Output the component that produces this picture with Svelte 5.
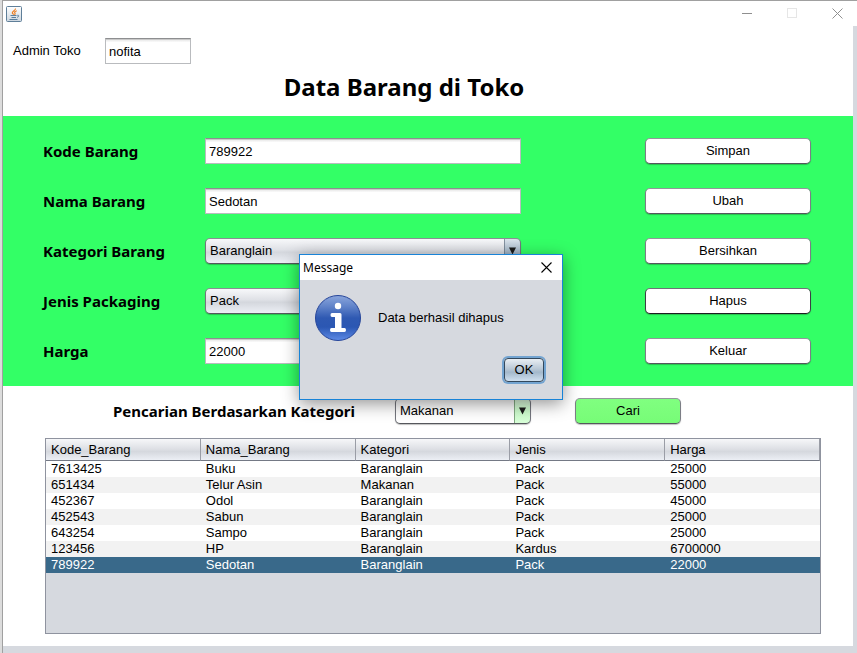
<script>
  const kategoriList = ['Baranglain', 'Makanan'];
  const jenisList = ['Pack', 'Kardus'];
  const columns = ['Kode_Barang', 'Nama_Barang', 'Kategori', 'Jenis', 'Harga'];
  const rows = [
    ['7613425', 'Buku', 'Baranglain', 'Pack', '25000'],
    ['651434', 'Telur Asin', 'Makanan', 'Pack', '55000'],
    ['452367', 'Odol', 'Baranglain', 'Pack', '45000'],
    ['452543', 'Sabun', 'Baranglain', 'Pack', '25000'],
    ['643254', 'Sampo', 'Baranglain', 'Pack', '25000'],
    ['123456', 'HP', 'Baranglain', 'Kardus', '6700000'],
    ['789922', 'Sedotan', 'Baranglain', 'Pack', '22000']
  ];
  const actions = ['Simpan', 'Ubah', 'Bersihkan', 'Hapus', 'Keluar'];

  let admin = $state('nofita');
  let kode = $state('789922');
  let nama = $state('Sedotan');
  let kategori = $state('Baranglain');
  let jenis = $state('Pack');
  let harga = $state('22000');
  let cari = $state('Makanan');
  let selected = $state(6);
  let dialogOpen = $state(true);
</script>

{#snippet arrow()}
  <svg class="arrow" width="9" height="8" viewBox="0 0 9 8" aria-hidden="true"><path d="M1 0.5H8L4.5 7.5Z" fill="#1b1b1b" /></svg>
{/snippet}

<div class="window">
  <header class="titlebar">
    <svg class="java" width="16" height="16" viewBox="0 0 16 16" aria-hidden="true">
      <defs>
        <linearGradient id="jv" x1="0" y1="0" x2="0" y2="1">
          <stop offset="0" stop-color="#ffffff" /><stop offset="1" stop-color="#ccd6df" />
        </linearGradient>
      </defs>
      <rect x="0.5" y="0.5" width="15" height="15" rx="1" fill="url(#jv)" stroke="#5f7f99" />
      <path d="M9.500 2.500C10 4.300 6 5 6.300 6.800C6.500 7.700 7.500 8 7.600 8.700M10.800 4.800C8.500 5.500 8.200 6.300 9 7.200C9.400 7.800 9 8.300 8.500 8.800" fill="none" stroke="#ec7f24" stroke-width="1.200" />
      <path d="M4.500 9.500H10.500M11.300 9.300C13.400 8.800 13.200 11 11 11.300M5.500 11.500H10M3.500 13.500H11.500" fill="none" stroke="#5b7f9c" stroke-width="1" />
    </svg>
    <div class="controls">
      <button aria-label="Minimize"><svg width="11" height="11"><path d="M0 5.500H10" stroke="#8f8f8f" /></svg></button>
      <button aria-label="Maximize" disabled><svg width="11" height="11"><rect x="0.5" y="0.5" width="9" height="9" fill="none" stroke="#e6e6e6" /></svg></button>
      <button aria-label="Close"><svg width="11" height="11"><path d="M0.500 0.500L10.500 10.500M10.500 0.500L0.500 10.500" stroke="#8f8f8f" /></svg></button>
    </div>
  </header>

  <main>
    <div class="admin">
      <label for="admin">Admin Toko</label>
      <input id="admin" type="text" bind:value={admin} />
    </div>
    <h1>Data Barang di Toko</h1>

    <section class="form">
      <div class="fields">
        <label for="kode">Kode Barang</label>
        <input id="kode" type="text" bind:value={kode} />
        <label for="nama">Nama Barang</label>
        <input id="nama" type="text" bind:value={nama} />
        <label for="kategori">Kategori Barang</label>
        <div class="combo">
          <select id="kategori" bind:value={kategori}>
            {#each kategoriList as k}<option>{k}</option>{/each}
          </select>
          {@render arrow()}
        </div>
        <label for="jenis">Jenis Packaging</label>
        <div class="combo">
          <select id="jenis" bind:value={jenis}>
            {#each jenisList as j}<option>{j}</option>{/each}
          </select>
          {@render arrow()}
        </div>
        <label for="harga">Harga</label>
        <input id="harga" type="text" bind:value={harga} />
      </div>
      <div class="actions">
        {#each actions as a}
          <button class="push" class:dark={a === 'Hapus'}>{a}</button>
        {/each}
      </div>
    </section>

    <div class="search">
      <label for="cari">Pencarian Berdasarkan Kategori</label>
      <div class="combo pale">
        <select id="cari" bind:value={cari}>
          {#each kategoriList as k}<option>{k}</option>{/each}
        </select>
        {@render arrow()}
      </div>
      <button class="push find">Cari</button>
    </div>

    <div class="tablebox">
      <table>
        <thead>
          <tr>{#each columns as c}<th scope="col">{c}</th>{/each}</tr>
        </thead>
        <tbody>
          {#each rows as row, i}
            <tr class:selected={i === selected} onclick={() => (selected = i)}>
              {#each row as cell}<td>{cell}</td>{/each}
            </tr>
          {/each}
        </tbody>
      </table>
    </div>
  </main>

  {#if dialogOpen}
    <div class="dialog" role="dialog" aria-labelledby="dlg-title">
      <div class="dialog-title">
        <span id="dlg-title">Message</span>
        <button aria-label="Close message" onclick={() => (dialogOpen = false)}>
          <svg width="11" height="11"><path d="M0.500 0.500L10.500 10.500M10.500 0.500L0.500 10.500" stroke="#000" stroke-width="1.100" /></svg>
        </button>
      </div>
      <div class="dialog-body">
        <svg width="48" height="48" viewBox="0 0 48 48" aria-hidden="true">
          <defs>
            <linearGradient id="info" x1="0" y1="0" x2="0" y2="1">
              <stop offset="0" stop-color="#8ba6dc" />
              <stop offset="0.250" stop-color="#5f82c9" />
              <stop offset="0.500" stop-color="#2f59b2" />
              <stop offset="0.700" stop-color="#2b57b3" />
              <stop offset="1" stop-color="#5d8ae6" />
            </linearGradient>
          </defs>
          <circle cx="24" cy="24" r="22.500" fill="url(#info)" stroke="#27469a" />
          <circle cx="24" cy="12" r="3.200" fill="#fff" />
          <path d="M18 19H26Q27.500 19 27.500 20.500V34H30.500Q32 34 32 36T30.500 38H17.500Q16 38 16 36T17.500 34H21V23H18Q16.500 23 16.500 21T18 19Z" fill="#fff" />
        </svg>
        <p>Data berhasil dihapus</p>
      </div>
      <div class="dialog-foot">
        <button class="ok" onclick={() => (dialogOpen = false)}>OK</button>
      </div>
    </div>
  {/if}
</div>

<style>
  :global(body) {
    margin: 0;
    background: #dcdcdc;
  }
  .window,
  button,
  input,
  select {
    font: 13px/16px 'Liberation Sans', Arial, sans-serif;
    color: #000;
  }
  .window {
    box-sizing: border-box;
    position: relative;
    min-height: 100vh;
    border-top: 1px solid #a0a0a0;
    border-left: 1px solid #a0a0a0;
    margin-left: 2px;
    background: #d6d9df;
  }
  button {
    box-sizing: border-box;
    margin: 0;
    padding: 0;
    border: 0;
    background: none;
  }
  .titlebar {
    display: flex;
    justify-content: space-between;
    align-items: center;
    height: 25px;
    padding: 0 14px 0 3px;
    background: #fff;
  }
  .controls {
    display: flex;
    gap: 34px;
  }
  .controls button,
  .dialog-title button {
    display: flex;
  }
  main {
    margin-right: 4px;
    background: #fff;
    padding: 12px 0;
  }
  .admin {
    display: flex;
    align-items: center;
    padding-left: 10px;
  }
  .admin label {
    width: 92px;
  }
  .admin input {
    width: 86px;
  }
  input {
    box-sizing: border-box;
    width: 100%;
    height: 26px;
    margin: 0;
    padding: 0 3px;
    border: 1px solid #b9bbbe;
    border-top-color: #8d8e90;
    border-radius: 0;
    background: linear-gradient(#c9c9c9 0 1px, #eee 1px 2px, #fff 3px);
    outline: none;
  }
  h1,
  .fields label,
  .search label {
    font: bold 15px/26px 'Noto Sans', 'Open Sans', sans-serif;
  }
  h1 {
    margin: 0;
    padding: 6px 48px 12px 0;
    font-size: 24px;
    line-height: 34px;
    text-align: center;
  }
  .form {
    display: flex;
    gap: 124px;
    padding: 22px 42px 22px 40px;
    background: #3f6;
  }
  .fields {
    flex: 1;
    display: grid;
    grid-template-columns: 162px minmax(0, 1fr);
    row-gap: 24px;
  }
  .actions {
    display: flex;
    flex-direction: column;
    gap: 24px;
    width: 166px;
  }
  .push {
    height: 26px;
    border: 1px solid #70727a;
    border-color: #94969c #7c7e86 #55575c;
    border-radius: 5px;
    background: #fff;
    box-shadow: 0 1px 1px rgb(0 0 0 / 25%);
  }
  .push.dark {
    border-color: #707278 #3c3e44 #1c1e20;
  }
  .find {
    width: 106px;
    background: linear-gradient(#80ff80, #77fc77);
  }
  .combo {
    display: flex;
    position: relative;
  }
  select {
    appearance: none;
    width: 100%;
    height: 26px;
    margin: 0;
    padding: 0 20px 0 4px;
    border: 1px solid #74767e;
    border-color: #8c8e95 #74767e #55575c;
    border-radius: 5px;
    background:
      linear-gradient(#8795a3, #6c7c8c) right 15px top / 1px 100% no-repeat,
      linear-gradient(#dbe4ec, #a9bbcb 50%, #9db1c3 60%, #c6d7e6) right / 15px 100% no-repeat,
      linear-gradient(#f7f8fa, #dfe1e6 45%, #d4d7dd 55%, #eceff5);
    box-shadow: 0 1px 1px rgb(0 0 0 / 25%);
    outline: none;
  }
  .pale select {
    background:
      linear-gradient(#86b086, #7fa67f) right 15px top / 1px 100% no-repeat,
      linear-gradient(#e4ffe4, #ccfccc 50%, #d8ffd8) right / 15px 100% no-repeat,
      #fff;
  }
  .arrow {
    position: absolute;
    right: 4px;
    top: 9px;
    pointer-events: none;
  }
  .search {
    display: flex;
    padding: 12px 0 14px 110px;
  }
  .search label {
    width: 282px;
  }
  .pale {
    width: 136px;
    margin-right: 44px;
  }
  .tablebox {
    box-sizing: border-box;
    min-height: 196px;
    margin: 0 32px 0 42px;
    border: 1px solid #8f939f;
    background: #d6d9df;
  }
  table {
    width: 100%;
    table-layout: fixed;
    border-collapse: separate;
    border-spacing: 0;
  }
  th {
    box-sizing: border-box;
    height: 22px;
    padding: 0 5px;
    border-right: 1px solid #9a9da6;
    border-bottom: 1px solid #747985;
    background: linear-gradient(#f6f7f9, #dfe1e6 45%, #d5d8de 60%, #eceff5);
    font-weight: normal;
    text-align: left;
  }
  td {
    height: 16px;
    padding: 0 5px;
    background: #fff;
  }
  tbody tr:nth-child(even) td {
    background: #f2f2f2;
  }
  tbody tr.selected td {
    background: #39698a;
    color: #fff;
  }
  .dialog {
    box-sizing: border-box;
    position: absolute;
    left: 296px;
    top: 253px;
    width: 264px;
    height: 146px;
    border: 1px solid #1883d7;
    background: #d6d9df;
    box-shadow: 0 4px 16px rgb(0 0 0 / 42%);
  }
  .dialog-title {
    display: flex;
    justify-content: space-between;
    align-items: center;
    height: 25px;
    padding: 0 10px 0 3px;
    background: #fff;
    font-family: 'Noto Sans', sans-serif;
    font-size: 12px;
  }
  .dialog-body {
    display: flex;
    align-items: center;
    gap: 16px;
    padding: 14px 14px 0;
  }
  .dialog-body p {
    margin: 0;
  }
  .dialog-foot {
    display: flex;
    justify-content: flex-end;
    padding: 16px 18px 0;
  }
  .ok {
    width: 40px;
    height: 24px;
    border: 1px solid #33485c;
    border-radius: 4px;
    background: linear-gradient(#e9eef3, #b9c8d6 45%, #a3b8cb 60%, #cfe0ef);
    box-shadow: 0 0 0 2px #73a4d1;
  }
</style>
